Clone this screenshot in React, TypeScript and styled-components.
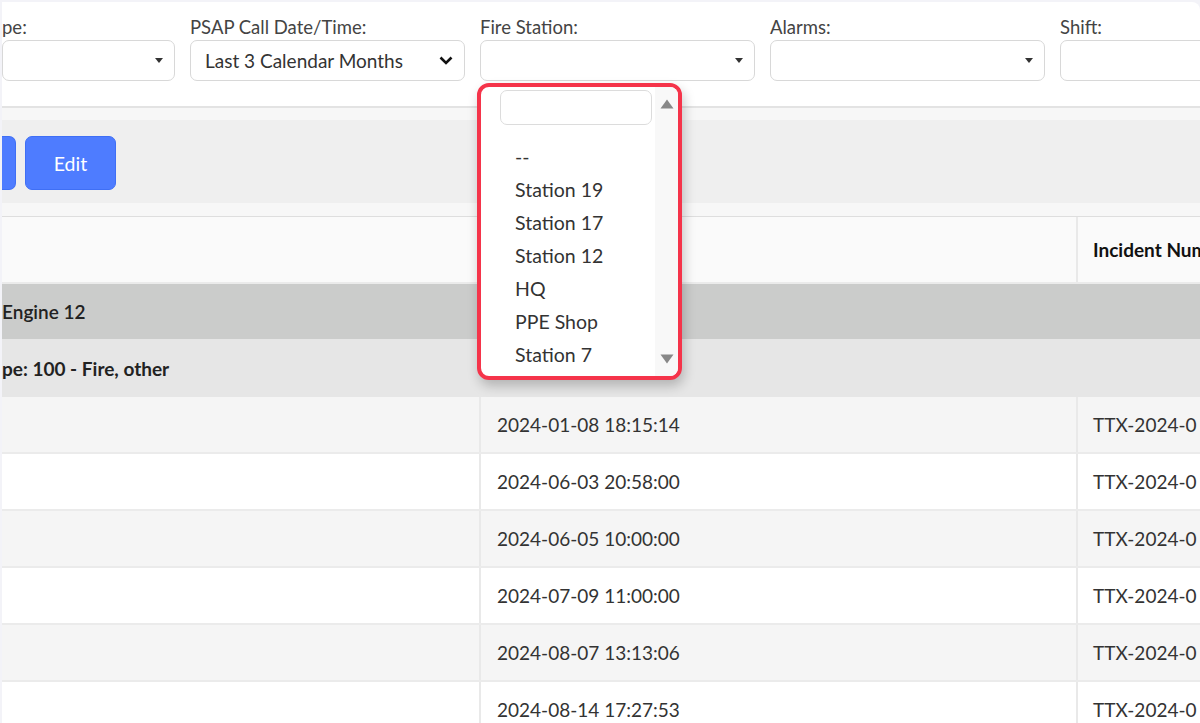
import styled, { createGlobalStyle } from "styled-components";

const GlobalStyle = createGlobalStyle`
  html, body {
    margin: 0;
    padding: 0;
    background: #f3f3f8;
  }
  body {
    font-family: Lato, "Open Sans", Arial, sans-serif;
    color: #333;
  }
  * {
    box-sizing: border-box;
  }
`;

const Page = styled.div`
  position: relative;
  width: 1200px;
  height: 723px;
  overflow: hidden;
  padding: 2px 0 0 2px;
  background: #f3f3f8;
`;

const FilterCard = styled.div`
  display: flex;
  gap: 15px;
  padding: 15px 0 25px;
  background: #fff;
  border-top-right-radius: 8px;
  border-bottom: 2px solid #e3e3e3;
`;

type FilterProps = {
  $width: number,
}

const Filter = styled.div<FilterProps>`
  flex: 0 0 ${(p) => p.$width}px;
  display: flex;
  flex-direction: column;
`;

const Label = styled.div`
  font-size: 18.5px;
  line-height: 20px;
  color: #444;
  margin-bottom: 3px;
  white-space: nowrap;
`;

const SelectBox = styled.div`
  height: 41px;
  display: flex;
  align-items: center;
  justify-content: space-between;
  padding: 0 11px 0 14px;
  background: #fff;
  border: 1px solid #d8d8d8;
  border-radius: 7px;
  font-size: 19px;
  color: #333;
  white-space: nowrap;
`;

const Main = styled.div`
  background: #f7f7f7;
  padding-top: 12px;
`;

const Toolbar = styled.div`
  display: flex;
  gap: 9px;
  padding: 16px 0 13px;
  background: #efefef;
`;

type ButtonProps = {
  $clipped?: boolean,
}

const Button = styled.button<ButtonProps>`
  height: 54px;
  width: ${(p) => (p.$clipped ? "14px" : "91px")};
  border: 1px solid #3f6ff5;
  border-radius: ${(p) => (p.$clipped ? "0 7px 7px 0" : "7px")};
  border-left-width: ${(p) => (p.$clipped ? "0" : "1px")};
  background: #4e7cff;
  color: #fff;
  font-family: Lato, "Open Sans", Arial, sans-serif;
  font-size: 19.5px;
  padding: 0;
`;

const Spacer = styled.div`
  height: 13px;
`;

const Table = styled.div`
  border-top: 1px solid #dedede;
`;

type RowProps = {
  $height: number,
  $bg: string,
}

const Row = styled.div<RowProps>`
  display: grid;
  grid-template-columns: 479px 597px 1fr;
  height: ${(p) => p.$height}px;
  background: ${(p) => p.$bg};
  border-bottom: 2px solid #ebebeb;
`;

const Cell = styled.div`
  display: flex;
  align-items: center;
  padding-left: 16px;
  border-right: 2px solid #e9e9e9;
  font-size: 19px;
  color: #333;
  white-space: nowrap;
  overflow: hidden;

  &:last-child {
    border-right: none;
    padding-left: 15px;
  }
`;

const HeadCell = styled(Cell)`
  font-weight: 700;
  font-size: 19px;
  color: #111;
`;

type GroupProps = {
  $height: number,
  $bg: string,
  $weight: number,
}

const GroupRow = styled.div<GroupProps>`
  height: ${(p) => p.$height}px;
  display: flex;
  align-items: center;
  background: ${(p) => p.$bg};
  font-size: 19px;
  font-weight: ${(p) => p.$weight};
  color: #222;
  white-space: nowrap;
`;

const Dropdown = styled.div`
  position: absolute;
  left: 477px;
  top: 83px;
  width: 205px;
  height: 297px;
  display: flex;
  background: #fff;
  border: 4px solid #f5344a;
  border-radius: 12px;
  box-shadow: 2px 6px 12px rgba(0, 0, 0, 0.22);
  overflow: hidden;
`;

const ListArea = styled.div`
  flex: 1;
  padding: 3px 0 0 19px;
`;

const Search = styled.div`
  width: 152px;
  height: 35px;
  border: 1px solid #dcdcdc;
  border-radius: 7px;
  margin-bottom: 15px;
`;

const Option = styled.div`
  font-size: 19.5px;
  line-height: 33px;
  color: #333;
  padding-left: 15px;
  white-space: nowrap;
`;

const ScrollTrack = styled.div`
  width: 23px;
  display: flex;
  flex-direction: column;
  justify-content: space-between;
  align-items: center;
  padding: 12px 0 12px;
  background: #f8f8f8;
`;

function Caret() {
  return (
    <svg width="8" height="5" viewBox="0 0 8 5">
      <path d="M0 0 H8 L4 5 Z" fill="#333" />
    </svg>
  );
}

function Chevron() {
  return (
    <svg width="14" height="9" viewBox="0 0 14 9">
      <path d="M1.5 1.5 L7 7 L12.5 1.5" fill="none" stroke="#111" strokeWidth="2.6" />
    </svg>
  );
}

function Arrow({ up }: { up?: boolean }) {
  return (
    <svg width="14" height="10" viewBox="0 0 14 10">
      <path d={up ? "M7 0.5 L13.5 9.5 H0.5 Z" : "M0.5 0.5 H13.5 L7 9.5 Z"} fill="#888" />
    </svg>
  );
}

const stations = ["--", "Station 19", "Station 17", "Station 12", "HQ", "PPE Shop", "Station 7"];

const rows = [
  "2024-01-08 18:15:14",
  "2024-06-03 20:58:00",
  "2024-06-05 10:00:00",
  "2024-07-09 11:00:00",
  "2024-08-07 13:13:06",
  "2024-08-14 17:27:53",
];

export default function App() {
  return (
    <>
      <GlobalStyle />
      <Page>
        <FilterCard>
          <Filter $width={173}>
            <Label>pe:</Label>
            <SelectBox><span /><Caret /></SelectBox>
          </Filter>
          <Filter $width={275}>
            <Label>PSAP Call Date/Time:</Label>
            <SelectBox>Last 3 Calendar Months<Chevron /></SelectBox>
          </Filter>
          <Filter $width={275}>
            <Label>Fire Station:</Label>
            <SelectBox><span /><Caret /></SelectBox>
          </Filter>
          <Filter $width={275}>
            <Label>Alarms:</Label>
            <SelectBox><span /><Caret /></SelectBox>
          </Filter>
          <Filter $width={275}>
            <Label>Shift:</Label>
            <SelectBox><span /></SelectBox>
          </Filter>
        </FilterCard>

        <Main>
          <Toolbar>
            <Button $clipped aria-label="more" />
            <Button>Edit</Button>
          </Toolbar>
          <Spacer />
          <Table>
            <Row $height={67} $bg="#fafafa">
              <HeadCell />
              <HeadCell />
              <HeadCell>Incident Number</HeadCell>
            </Row>
            <GroupRow $height={55} $bg="#cbcccb" $weight={600}>Engine 12</GroupRow>
            <GroupRow $height={58} $bg="#e6e6e6" $weight={700}>pe: 100 - Fire, other</GroupRow>
            {rows.map((date, i) => (
              <Row key={date} $height={57} $bg={i % 2 === 0 ? "#f5f5f5" : "#ffffff"}>
                <Cell />
                <Cell>{date}</Cell>
                <Cell>TTX-2024-0</Cell>
              </Row>
            ))}
          </Table>
        </Main>

        <Dropdown>
          <ListArea>
            <Search />
            {stations.map((s) => (
              <Option key={s}>{s}</Option>
            ))}
          </ListArea>
          <ScrollTrack>
            <Arrow up />
            <Arrow />
          </ScrollTrack>
        </Dropdown>
      </Page>
    </>
  );
}
